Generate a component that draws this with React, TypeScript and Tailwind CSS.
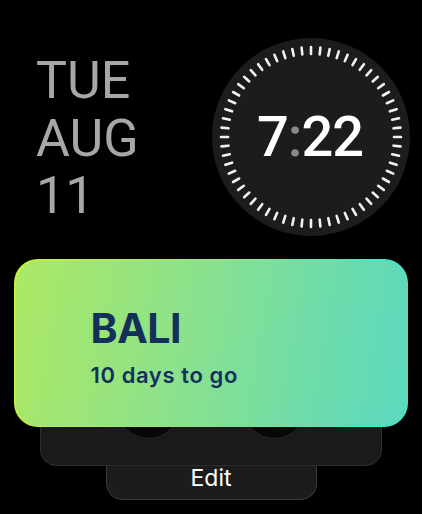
import React from 'react'

const ticks = Array.from({ length: 60 }, (_, i) => i)

function ClockFace() {
  return (
    <div className="relative w-[198px] h-[198px] rounded-full bg-[#1c1c1c] flex items-center justify-center">
      <svg className="absolute inset-0" width="198" height="198" viewBox="0 0 198 198">
        {ticks.map(i => {
          const a = (i / 60) * Math.PI * 2
          const s = Math.sin(a)
          const c = Math.cos(a)
          return (
            <line
              key={i}
              x1={99 + s * 83}
              y1={99 - c * 83}
              x2={99 + s * 90}
              y2={99 - c * 90}
              stroke="#f2f2f2"
              strokeWidth="2.6"
              strokeLinecap="round"
            />
          )
        })}
      </svg>
      <span
        className="relative text-white text-[56px] leading-[56px] font-medium tracking-[-1px] ml-[-2px]"
        style={{ fontFamily: 'Roboto, "Liberation Sans", sans-serif' }}
      >
        7<span className="text-[#8a8a8a]">:</span>22
      </span>
    </div>
  )
}

export default function App() {
  return (
    <div className="w-[422px] h-[514px] bg-black overflow-hidden flex flex-col">
      <div className="flex items-start">
        <div
          className="pl-[36px] pt-[52px] text-[#a7a7a7] text-[52px] leading-[57.5px] font-normal"
          style={{ fontFamily: 'Roboto, "Liberation Sans", sans-serif' }}
        >
          <div>TUE</div>
          <div>AUG</div>
          <div>11</div>
        </div>
        <div className="ml-auto mr-[12px] mt-[38px]">
          <ClockFace />
        </div>
      </div>

      <div className="relative z-20 mx-[14px] mt-[23px] h-[168px] rounded-[24px] p-[1.5px] bg-[linear-gradient(100deg,#c6f23c_0%,#8fe286_50%,#2ee8dc_100%)]">
        <div
          className="h-full rounded-[22.5px] bg-[linear-gradient(100deg,#ace864_0%,#8ee289_40%,#6edcaa_75%,#5bd8bf_100%)] pl-[75px] pt-[47px] text-[#12305a]"
          style={{ fontFamily: 'Inter, "Noto Sans", sans-serif' }}
        >
          <div className="text-[41px] leading-[41px] font-bold tracking-[-0.5px]">BALI</div>
          <div className="mt-[16px] text-[22px] leading-[21px] font-semibold tracking-[0.6px]">10 days to go</div>
        </div>
      </div>

      <div className="relative z-10 mx-[40px] -mt-[60px] h-[99px] rounded-[16px] bg-[#1a1a1a] border border-[#2e2e2e] flex justify-center gap-[63px] pt-[8px]">
        <div className="w-[63px] h-[63px] rounded-full bg-[#070707] border border-[#262626]" />
        <div className="w-[63px] h-[63px] rounded-full bg-[#070707] border border-[#262626]" />
      </div>

      <div className="relative z-0 mx-auto -mt-[14px] w-[211px] h-[48px] rounded-[16px] bg-[#1c1c1c] border-[1.5px] border-[#3a3a3a] flex justify-center pt-[14px]">
        <span
          className="text-white text-[23px] leading-[23px] font-normal"
          style={{ fontFamily: 'Inter, "Noto Sans", sans-serif' }}
        >
          Edit
        </span>
      </div>
    </div>
  )
}
